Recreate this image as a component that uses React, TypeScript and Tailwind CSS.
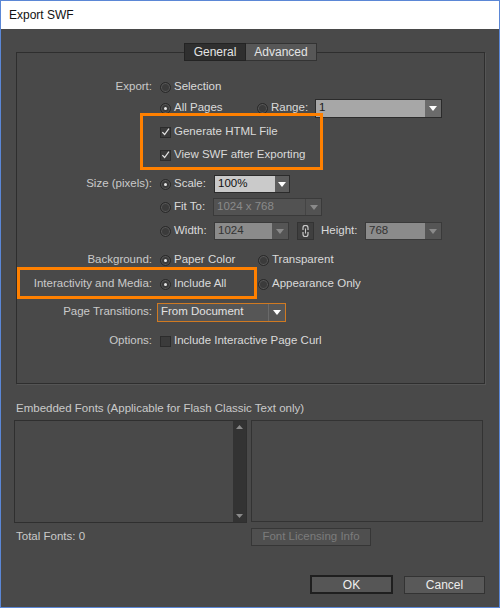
import React from 'react'

const label = 'text-[#c9c9c9]'

function Radio({ checked }: { checked?: boolean }) {
  return (
    <span className="w-[11px] h-[11px] rounded-full bg-[#3b3b3b] border border-[#2a2a2a] shadow-[inset_0_0_0_1px_#585858] flex items-center justify-center shrink-0">
      {checked && <span className="w-[3px] h-[3px] rounded-full bg-[#e8e8e8]" />}
    </span>
  )
}

function Check({ checked }: { checked?: boolean }) {
  return (
    <span className="w-[11px] h-[11px] bg-[#3b3b3b] border border-[#2c2c2c] flex items-center justify-center shrink-0">
      {checked && (
        <svg width="10" height="10" viewBox="0 0 10 10">
          <path d="M1.5 5.2 L4 7.8 L8.8 1.2" fill="none" stroke="#e2e2e2" strokeWidth="1.4" />
        </svg>
      )}
    </span>
  )
}

function Tri({ color = '#ffffff' }: { color?: string }) {
  return (
    <svg width="8" height="5" viewBox="0 0 8 5">
      <path d="M0 0 H8 L4 5 Z" fill={color} />
    </svg>
  )
}

function Opt({ checked, text, box }: { checked?: boolean; text: string; box?: boolean }) {
  return (
    <div className="flex items-center gap-[3px]">
      {box ? <Check checked={checked} /> : <Radio checked={checked} />}
      <span className="text-[#dadada]">{text}</span>
    </div>
  )
}

function Row({ name, mt, children }: { name?: string; mt: string; children?: React.ReactNode }) {
  return (
    <div className={`flex items-center h-[20px] ${mt}`}>
      <div className={`w-[135px] text-right shrink-0 ${label}`}>{name}</div>
      <div className="ml-[8px] flex items-center">{children}</div>
    </div>
  )
}

export default function App() {
  return (
    <div className="w-[500px] h-[608px] border border-[#5b87d6] flex flex-col font-['Liberation_Sans',Arial,sans-serif] text-[11.5px] leading-none">
      <div className="h-[28px] bg-white flex items-center pl-[8px] text-[#111] text-[12px]">Export SWF</div>
      <div className="flex-1 bg-[#494949] relative flex flex-col">
        {/* General group */}
        <div className="ml-[15px] mt-[23px] w-[469px] h-[332px] border border-[#2e2e2e] shadow-[1px_1px_0_#555]">
          <div className="flex justify-center -mt-[10px] text-[12px]">
            <div className="w-[62px] h-[18px] bg-[#2f2f2f] border border-[#232323] text-[#e4e4e4] flex items-center justify-center">General</div>
            <div className="w-[71px] h-[18px] bg-[#575757] border border-[#333] border-l-0 text-[#e4e4e4] flex items-center justify-center">Advanced</div>
          </div>

          <Row name="Export:" mt="mt-[16px]">
            <Opt text="Selection" />
          </Row>
          <Row mt="mt-[1px]">
            <div className="w-[97px]">
              <Opt checked text="All Pages" />
            </div>
            <div className="w-[58px]">
              <Opt text="Range:" />
            </div>
            <div className="w-[127px] h-[19px] flex border border-[#2b2b2b]">
              <div className="flex-1 bg-[#a7a7a7] text-[#1a1a1a] flex items-center pl-[3px]">1</div>
              <div className="w-[16px] bg-[#6b6b6b] flex items-center justify-center"><Tri /></div>
            </div>
          </Row>
          <Row mt="mt-[4px]">
            <Opt box checked text="Generate HTML File" />
          </Row>
          <Row mt="mt-[3px]">
            <Opt box checked text="View SWF after Exporting" />
          </Row>
          <Row name="Size (pixels):" mt="mt-[9px]">
            <div className="w-[54px]">
              <Opt checked text="Scale:" />
            </div>
            <div className="w-[76px] h-[18px] flex border border-[#2b2b2b]">
              <div className="flex-1 bg-[#cacaca] text-[#111] flex items-center pl-[3px]">100%</div>
              <div className="w-[14px] bg-[#5d5d5d] flex items-center justify-center"><Tri /></div>
            </div>
          </Row>
          <Row mt="mt-[3px]">
            <div className="w-[53px]">
              <Opt text="Fit To:" />
            </div>
            <div className="w-[109px] h-[18px] flex border border-[#3a3a3a] bg-[#525252]">
              <div className="flex-1 text-[#8a8a8a] flex items-center pl-[3px]">1024 x 768</div>
              <div className="w-[16px] border-l border-[#444] flex items-center justify-center"><Tri color="#8a8a8a" /></div>
            </div>
          </Row>
          <Row mt="mt-[4px]">
            <div className="w-[54px]">
              <Opt text="Width:" />
            </div>
            <div className="w-[75px] h-[18px] flex border border-[#3a3a3a]">
              <div className="flex-1 bg-[#8b8b8b] text-[#333] flex items-center pl-[3px]">1024</div>
              <div className="w-[16px] bg-[#555] flex items-center justify-center"><Tri color="#8a8a8a" /></div>
            </div>
            <div className="ml-[8px] w-[17px] h-[18px] bg-[#3f3f3f] border border-[#333] flex items-center justify-center">
              <svg width="7" height="12" viewBox="0 0 7 12">
                <path d="M1 5 V2.8 A2.5 2.5 0 0 1 6 2.8 V5" fill="none" stroke="#c8c8c8" strokeWidth="1.2" />
                <path d="M1 7 V9.2 A2.5 2.5 0 0 0 6 9.2 V7" fill="none" stroke="#c8c8c8" strokeWidth="1.2" />
                <path d="M3.5 3.5 V8.5" stroke="#c8c8c8" strokeWidth="1" />
              </svg>
            </div>
            <span className="ml-[7px] w-[44px] text-[#dadada]">Height:</span>
            <div className="w-[77px] h-[18px] flex border border-[#3a3a3a]">
              <div className="flex-1 bg-[#8b8b8b] text-[#333] flex items-center pl-[3px]">768</div>
              <div className="w-[16px] bg-[#555] flex items-center justify-center"><Tri color="#8a8a8a" /></div>
            </div>
          </Row>
          <Row name="Background:" mt="mt-[9px]">
            <div className="w-[98px]">
              <Opt checked text="Paper Color" />
            </div>
            <Opt text="Transparent" />
          </Row>
          <Row name="Interactivity and Media:" mt="mt-[4px]">
            <div className="w-[98px]">
              <Opt checked text="Include All" />
            </div>
            <Opt text="Appearance Only" />
          </Row>
          <Row name="Page Transitions:" mt="mt-[8px]">
            <div className="-ml-[3px] w-[129px] h-[19px] flex border border-[#d07a22] bg-[#565656]">
              <div className="flex-1 text-[#e2e2e2] flex items-center pl-[3px]">From Document</div>
              <div className="w-[17px] border-l border-[#6a6a6a] flex items-center justify-center"><Tri /></div>
            </div>
          </Row>
          <Row name="Options:" mt="mt-[9px]">
            <Opt box text="Include Interactive Page Curl" />
          </Row>
        </div>

        {/* Embedded fonts */}
        <div className="ml-[15px] mt-[17px] h-[16px] flex items-center text-[#c9c9c9]">
          Embedded Fonts (Applicable for Flash Classic Text only)
        </div>
        <div className="ml-[13px] mt-[3px] flex gap-[4px]">
          <div className="w-[233px] h-[103px] border border-[#2f2f2f] flex justify-end">
            <div className="w-[13px] bg-[#333] flex flex-col items-center justify-between py-[4px]">
              <svg width="7" height="4" viewBox="0 0 7 4"><path d="M0 4 H7 L3.5 0 Z" fill="#8a8a8a" /></svg>
              <svg width="7" height="4" viewBox="0 0 7 4"><path d="M0 0 H7 L3.5 4 Z" fill="#8a8a8a" /></svg>
            </div>
          </div>
          <div className="w-[232px] h-[102px] border border-[#333]" />
        </div>
        <div className="ml-[15px] mt-[5px] h-[17px] flex items-center">
          <span className="w-[235px] text-[#c9c9c9]">Total Fonts: 0</span>
          <div className="w-[120px] h-[18px] bg-[#4f4f4f] border border-[#363636] text-[#7c7c7c] flex items-center justify-center">
            Font Licensing Info
          </div>
        </div>
        <div className="mt-[30px] mr-[14px] flex justify-end gap-[11px] text-[12px]">
          <div className="w-[83px] h-[19px] bg-[#565656] border-2 border-[#1f1f1f] text-[#f0f0f0] flex items-center justify-center">OK</div>
          <div className="w-[81px] h-[18px] mt-[1px] bg-[#595959] border border-[#333] text-[#ececec] flex items-center justify-center">Cancel</div>
        </div>

        {/* highlight annotations */}
        <div className="absolute left-[139px] top-[84px] w-[183px] h-[57px] border-[3px] border-[#ff8000]" />
        <div className="absolute left-[16px] top-[238px] w-[240px] h-[32px] border-[3px] border-[#ff8000]" />
      </div>
    </div>
  )
}
